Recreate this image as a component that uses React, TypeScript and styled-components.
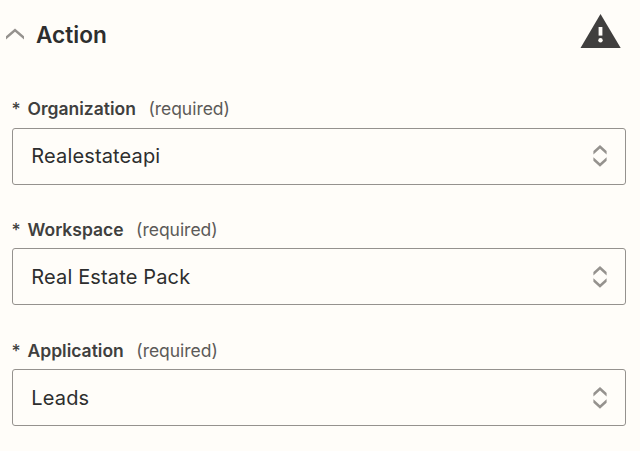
import React from "react";
import styled, { createGlobalStyle } from "styled-components";

const GlobalStyle = createGlobalStyle`
  * { box-sizing: border-box; }
  body { margin: 0; background: #fffdf9; font-family: Inter, "Liberation Sans", sans-serif; }
`;
const Panel = styled.main`
  width: 640px; height: 451px; background: #fffdf9; overflow: hidden;
`;
const Header = styled.header`
  display: flex; align-items: center; height: 70px; padding: 0 19px 0 5px;
`;
const Chevron = styled.svg`
  display: block; width: 20px; height: 12px; margin: 0 11px 2px 0;
`;
const Title = styled.h2`
  flex: 1; margin: 0; font-size: 22.6px; line-height: 28px; font-weight: 560; color: #2d2e2e;
`;
const Warning = styled.svg`
  display: block; width: 41px; height: 34px; margin-bottom: 8px;
`;
const Fields = styled.div`
  display: flex; flex-direction: column; gap: 35px; padding: 28px 14px 0 12px;
`;
const Field = styled.div<{ $labelHeight: number }>`
  display: grid; grid-template-rows: ${(p) => p.$labelHeight}px 57px; height: 86px;
`;
const Label = styled.div`
  display: flex; line-height: 22px; font-size: 17.5px; color: #403f3e;
`;
const Star = styled.span`
  width: 16px; margin-left: -0.5px; font-weight: 500;
`;
const Name = styled.span`
  font-weight: 570;
`;
const Required = styled.span`
  margin-left: 12.5px; font-weight: 380; color: #5c5a58; letter-spacing: -0.03px;
`;
const Select = styled.button<{ $raise: number }>`
  display: flex; align-items: center; justify-content: space-between; width: 614px; height: 57px;
  padding: 0 18px ${(p) => p.$raise}px 18.3px; border: 1px solid #95928e; border-radius: 3px; background: #fffdf9;
  font: 400 20px Inter, "Liberation Sans", sans-serif; letter-spacing: 0.15px; color: #2d2e2e; text-align: left;
`;
const Sorter = styled.svg`
  display: block; width: 14px; height: 22px;
`;

const fields = [
  { name: "Organization", value: "Realestateapi", labelHeight: 30, raise: 2 },
  { name: "Workspace", value: "Real Estate Pack", labelHeight: 29, raise: 0 },
  { name: "Application", value: "Leads", labelHeight: 29, raise: 0 },
];

export default function App() {
  return (
    <Panel>
      <GlobalStyle />
      <Header>
        <Chevron viewBox="0 0 20 12" fill="#95928e">
          <path d="M10 .5 19 8.300v3.300L10 3.800 1 11.600V8.300Z" />
        </Chevron>
        <Title>Action</Title>
        <Warning viewBox="0 0 41 34">
          <path d="M20.500 0 40.700 34H.500Z" fill="#403f3e" />
          <path d="M18.600 13h3.800v8.600h-3.800z" fill="#fffdf9" />
          <circle cx="20.500" cy="26.200" r="2.200" fill="#fffdf9" />
        </Warning>
      </Header>
      <Fields>
        {fields.map((f) => (
          <Field key={f.name} $labelHeight={f.labelHeight}>
            <Label><Star>*</Star><Name>{f.name}</Name><Required>(required)</Required></Label>
            <Select $raise={f.raise}>
              {f.value}
              <Sorter viewBox="0 0 14 22" fill="#95928e">
                <path d="M7 0 13.600 5.900v3.500L7 3.500.400 9.400V5.900ZM7 21.700.400 15.800v-3.500L7 18.200l6.600-5.900v3.500Z" />
              </Sorter>
            </Select>
          </Field>
        ))}
      </Fields>
    </Panel>
  );
}
